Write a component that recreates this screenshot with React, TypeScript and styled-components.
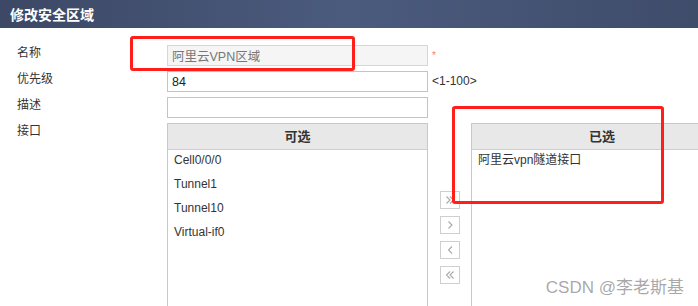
import React from 'react'
import styled, { createGlobalStyle } from 'styled-components'

const GlobalStyle = createGlobalStyle`
  html, body {
    margin: 0;
    padding: 0;
    background: #fff;
    overflow: hidden;
  }
  body {
    font-family: "Liberation Sans", "Noto Sans CJK SC", Arial, sans-serif;
    font-size: 12px;
    color: #333;
  }
`

const Page = styled.div`
  position: relative;
  width: 698px;
  height: 306px;
  overflow: hidden;
`

const TitleBar = styled.div`
  height: 28px;
  display: flex;
  align-items: center;
  padding-left: 10px;
  background: linear-gradient(to right, #3c4865 0%, #4b5b7e 50%, #3f4c6a 100%);
  color: #fff;
  font-size: 14px;
  font-weight: bold;
`

const Form = styled.div`
  display: grid;
  grid-template-columns: 150px auto;
  row-gap: 5px;
  padding: 17px 0 0 17px;
`

const Label = styled.div`
  line-height: 16px;
  font-size: 12px;
  color: #333;
`

const Field = styled.div`
  display: flex;
  align-items: flex-start;
`

const Input = styled.input<{ $disabled?: boolean }>`
  box-sizing: border-box;
  width: 261px;
  height: 21px;
  margin: 0;
  padding: 0 4px;
  border: 1px solid ${p => (p.$disabled ? '#d6d6d6' : '#c4c4c4')};
  background: ${p => (p.$disabled ? '#f5f5f5' : '#fff')};
  color: ${p => (p.$disabled ? '#777' : '#222')};
  font-family: inherit;
  font-size: 12.5px;
  outline: none;
`

const Star = styled.span`
  color: #f77;
  font-size: 10px;
  margin: 5px 0 0 4px;
`

const Hint = styled.span`
  margin-left: 4px;
  line-height: 21px;
  font-size: 12px;
  color: #333;
`

const Transfer = styled.div`
  display: flex;
  align-items: flex-start;
`

const ListBox = styled.div<{ $w: number }>`
  box-sizing: border-box;
  flex-shrink: 0;
  width: ${p => p.$w}px;
  height: 200px;
  border: 1px solid #c8c8c8;
  border-bottom: none;
`

const ListHead = styled.div`
  height: 25px;
  line-height: 25px;
  text-align: center;
  background: #e8e8e8;
  border-bottom: 1px solid #cfcfcf;
  font-weight: bold;
  font-size: 13px;
  color: #333;
`

const Item = styled.div`
  padding-left: 6px;
  line-height: 20px;
  margin-bottom: 4px;
  white-space: nowrap;
  color: #333;
`

const Moves = styled.div`
  flex-shrink: 0;
  display: flex;
  flex-direction: column;
  gap: 7px;
  padding-top: 68px;
  margin: 0 11px 0 12px;
`

const MoveButton = styled.div`
  box-sizing: border-box;
  width: 20px;
  height: 18px;
  border: 1px solid #cfcfcf;
  background: #fff;
  display: flex;
  align-items: center;
  justify-content: center;
  svg {
    display: block;
  }
`

const Mark = styled.div<{ $x: number; $y: number; $w: number; $h: number }>`
  position: absolute;
  left: ${p => p.$x}px;
  top: ${p => p.$y}px;
  width: ${p => p.$w}px;
  height: ${p => p.$h}px;
  box-sizing: border-box;
  border: 3px solid #ff1e1a;
  border-radius: 3px;
  pointer-events: none;
`

const Watermark = styled.div`
  position: absolute;
  right: 14px;
  bottom: 8px;
  font-size: 17px;
  color: rgba(140, 140, 140, 0.75);
  white-space: nowrap;
`

const Chevron: React.FC<{ dir: 'left' | 'right'; double?: boolean }> = ({ dir, double }) => {
  const one = (x: number) =>
    dir === 'right' ? `M${x} 1.5 L${x + 3.5} 5 L${x} 8.5` : `M${x + 3.5} 1.5 L${x} 5 L${x + 3.5} 8.5`
  return (
    <svg width="10" height="10" viewBox="0 0 10 10">
      <path
        d={double ? `${one(1.5)} ${one(5)}` : one(3.5)}
        fill="none"
        stroke="#a8a8a8"
        strokeWidth="1.1"
      />
    </svg>
  )
}

const available = ['Cell0/0/0', 'Tunnel1', 'Tunnel10', 'Virtual-if0']
const selected = ['阿里云vpn隧道接口']

const App: React.FC = () => {
  return (
    <Page>
      <GlobalStyle />
      <TitleBar>修改安全区域</TitleBar>
      <Form>
        <Label>名称</Label>
        <Field>
          <Input $disabled readOnly value="阿里云VPN区域" />
          <Star>*</Star>
        </Field>
        <Label>优先级</Label>
        <Field>
          <Input readOnly value="84" />
          <Hint>&lt;1-100&gt;</Hint>
        </Field>
        <Label>描述</Label>
        <Field>
          <Input readOnly value="" />
        </Field>
        <Label>接口</Label>
        <Transfer>
          <ListBox $w={261}>
            <ListHead>可选</ListHead>
            {available.map(name => (
              <Item key={name}>{name}</Item>
            ))}
          </ListBox>
          <Moves>
            <MoveButton><Chevron dir="right" double /></MoveButton>
            <MoveButton><Chevron dir="right" /></MoveButton>
            <MoveButton><Chevron dir="left" /></MoveButton>
            <MoveButton><Chevron dir="left" double /></MoveButton>
          </Moves>
          <ListBox $w={262}>
            <ListHead>已选</ListHead>
            {selected.map(name => (
              <Item key={name}>{name}</Item>
            ))}
          </ListBox>
        </Transfer>
      </Form>
      <Mark $x={130} $y={36} $w={225} $h={35} />
      <Mark $x={452} $y={106} $w={212} $h={98} />
      <Watermark>CSDN @李老斯基</Watermark>
    </Page>
  )
}

export default App
